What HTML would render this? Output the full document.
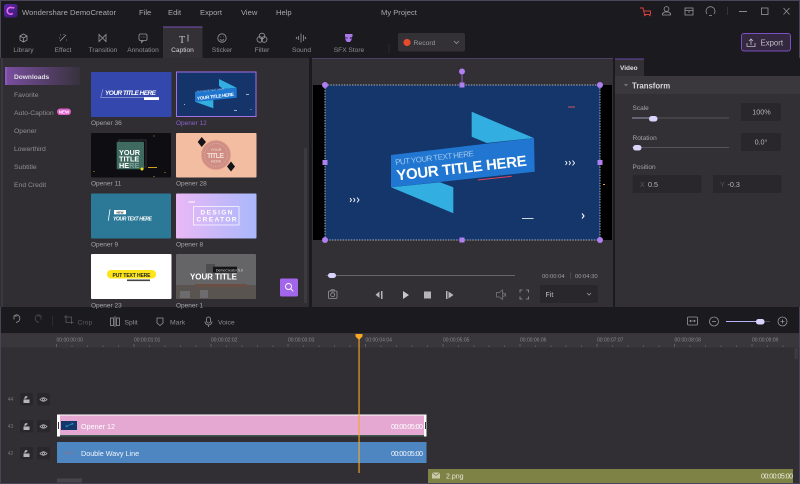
<!DOCTYPE html>
<html><head><meta charset="utf-8"><style>
html,body{margin:0;padding:0;background:#1b1a1e;width:800px;height:484px;overflow:hidden}
svg{display:block;filter:blur(.3px)}
text{font-family:"Liberation Sans",sans-serif}
.m{fill:#a9a8ab;font-size:7.6px}
.tab{fill:#8f8e92;font-size:6.6px;text-anchor:middle}
.side{fill:#8f8e92;font-size:6.8px}
.lbl{fill:#a5a4a8;font-size:6.5px}
.rul{fill:#8b8a8e;font-size:5px}
.ic{fill:none;stroke:#98979b;stroke-width:.8}
.tb{fill:#8f8e92;font-size:6.8px}
.num{fill:#77767a;font-size:5px;text-anchor:middle}
.val{fill:#b5b4b8;font-size:7.2px;text-anchor:middle}
.h{fill:#b07ff0}
.tk{stroke:#77767a;stroke-width:.6}
</style></head><body>
<svg width="800" height="484" viewBox="0 0 800 484" xmlns="http://www.w3.org/2000/svg">
<defs>
<linearGradient id="dl" x1="0" x2="1" y1="0" y2="0"><stop offset="0" stop-color="#7a4fa0"/><stop offset="1" stop-color="#38323e"/></linearGradient>
<linearGradient id="o8" x1="0" x2="1" y1="0" y2="0"><stop offset="0" stop-color="#eab8f6"/><stop offset="1" stop-color="#a9b8fb"/></linearGradient>
<linearGradient id="logo" x1="0" x2="1" y1="0" y2="1"><stop offset="0" stop-color="#5a28a8"/><stop offset="1" stop-color="#3d1a78"/></linearGradient>
</defs>
<rect width="800" height="484" fill="#1b1a1e"/>
<rect x="0" y="0" width="800" height="1" fill="#4a4458"/>
<rect x="0" y="0" width="1" height="484" fill="#4a4458"/>
<rect x="799" y="0" width="1" height="484" fill="#4a4458"/>
<rect x="0" y="483" width="800" height="1" fill="#4a4458"/>

<!-- title bar -->
<rect x="4" y="4" width="13.500" height="13.500" rx="2.500" fill="url(#logo)"/>
<path d="M12.800 8.200a3.400 3.400 0 1 0 0 5.200" fill="none" stroke="#ee6cea" stroke-width="1.600"/>
<circle cx="13.600" cy="7.800" r=".9" fill="#ee6cea"/>
<text class="m" x="22" y="15" textLength="94">Wondershare DemoCreator</text>
<text class="m" x="139" y="15">File</text>
<text class="m" x="168" y="15">Edit</text>
<text class="m" x="200" y="15">Export</text>
<text class="m" x="241" y="15">View</text>
<text class="m" x="276" y="15">Help</text>
<text class="m" x="381" y="15">My Project</text>
<path d="M640 8h3l1.500 6.500h6M644 11h6.500v3" fill="none" stroke="#d8413f" stroke-width="1"/><circle cx="645" cy="15.500" r=".8" fill="#d8413f"/><circle cx="650" cy="15.500" r=".8" fill="#d8413f"/>
<circle cx="666.500" cy="9" r="2.400" class="ic"/><path class="ic" d="M662.500 15v-1.500l2-1.500h4l2 1.500V15z"/>
<rect x="685" y="8" width="8" height="7" class="ic"/><path class="ic" d="M685 10.500h8M688 12h2"/>
<path class="ic" d="M707 14a4.500 4.500 0 1 1 7 0M709 15.500h3"/>
<path d="M727.500 7v8" stroke="#3d3b40" stroke-width=".8"/>
<path d="M739 11.500h8" stroke="#98979b" stroke-width=".9"/>
<rect x="761.500" y="8" width="6.500" height="6.500" class="ic"/>
<path class="ic" d="M783.500 8l6 6.500M789.500 8l-6 6.500"/>

<!-- tabs -->
<rect x="163" y="27" width="39.500" height="31" fill="#333135"/>
<rect x="163" y="26.500" width="39.500" height="1" fill="#7a50b8"/>
<path class="ic" d="M23.500 34l3.500 2v4l-3.500 2-3.500-2v-4zM20 36l3.500 2 3.500-2M23.500 38v4"/>
<path class="ic" d="M60 41l6-6M60 35h1M59 38h1M66 40h1M64 34v1"/>
<path class="ic" d="M99 34.500v7l3.500-3.500zM106 34.500v7l-3.500-3.500z"/>
<rect x="139" y="34" width="8" height="6.500" rx="1.500" class="ic"/><path class="ic" d="M141.500 40.500v2l2-2M141.500 37h.6M143 37h.6M144.500 37h.6"/>
<text x="182" y="43" fill="#c8c7cb" font-size="10" text-anchor="middle" style="font-family:'Liberation Serif',serif">T</text><path d="M188 34.500v7" stroke="#c8c7cb" stroke-width=".8"/>
<circle cx="222" cy="38" r="4.200" class="ic"/><path class="ic" d="M220 39.500q2 1.500 4 0M220.300 36.800h.5M223.300 36.800h.5"/>
<circle cx="262" cy="36" r="2.800" class="ic"/><circle cx="259.800" cy="39.500" r="2.800" class="ic"/><circle cx="264.200" cy="39.500" r="2.800" class="ic"/>
<path class="ic" d="M301 33.500v9M303.500 35v6M298.500 36v4M306 37l-1 1 1 1M296 37l1 1-1 1"/>
<path d="M345 34h7.500v2.500l-1 .7V40l-1.500 2h-3l-1.500-2v-3l-.5-.5z" fill="#a878e8"/><circle cx="347" cy="38" r=".7" fill="#2a2540"/><circle cx="350.500" cy="38" r=".7" fill="#2a2540"/>
<text class="tab" x="23.500" y="52">Library</text>
<text class="tab" x="63" y="52">Effect</text>
<text class="tab" x="103" y="52">Transition</text>
<text class="tab" x="143" y="52">Annotation</text>
<text class="tab" x="182.500" y="52" style="fill:#d5d4d8">Caption</text>
<text class="tab" x="222" y="52">Sticker</text>
<text class="tab" x="262" y="52">Filter</text>
<text class="tab" x="301.500" y="52">Sound</text>
<text class="tab" x="349" y="52">SFX Store</text>

<!-- record -->
<path d="M389 44v9" stroke="#333" stroke-width=".7"/>
<rect x="398" y="33" width="67" height="18.500" rx="2" fill="#333135"/>
<circle cx="407" cy="42.500" r="3.600" fill="#e84a2c"/>
<text x="413.500" y="45" fill="#99989c" font-size="6.800">Record</text>
<path class="ic" d="M454 41l2.500 2.500 2.500-2.500"/>

<!-- export -->
<rect x="741.500" y="33.500" width="49" height="17.500" rx="2.500" fill="#33283f" stroke="#7d4fc0" stroke-width="1"/>
<path class="ic" d="M747 43v3.500h8V43M751 45v-6M749 41l2-2 2 2" style="stroke:#c0bfc3"/>
<text x="760.500" y="45.500" fill="#c0bfc3" font-size="7.800">Export</text>

<!-- left panel -->
<rect x="0" y="58" width="309" height="249" fill="#302e32"/>
<rect x="1" y="58" width="2" height="249" fill="#3a3840"/>
<rect x="5" y="67" width="75" height="18" fill="url(#dl)"/>
<rect x="5" y="67" width="2" height="18" fill="#8a58c0"/>
<text x="14" y="79" fill="#e0dfe3" font-size="6.600" font-weight="bold">Downloads</text>
<text class="side" x="14" y="97">Favorite</text>
<text class="side" x="14" y="115">Auto-Caption</text>
<rect x="57" y="108.500" width="14" height="6.500" rx="3.200" fill="#df5fc8"/><text x="64" y="113.600" fill="#fff" font-size="4.500" text-anchor="middle" font-weight="bold">NEW</text>
<text class="side" x="14" y="133">Opener</text>
<text class="side" x="14" y="151">Lowerthird</text>
<text class="side" x="14" y="169">Subtitle</text>
<text class="side" x="14" y="187">End Credit</text>
<rect x="304" y="148" width="3" height="155" fill="#3c3a3e"/>

<!-- Opener 36 -->
<rect x="91" y="72" width="80.500" height="45" rx="1" fill="#3347ad"/>
<path d="M103 89.300l-2.300 8H159" fill="none" stroke="#aab3e0" stroke-width=".6"/>
<text x="105" y="95" fill="#fff" font-size="6.500" font-weight="bold" font-style="italic" textLength="51">YOUR TITLE HERE</text>
<rect x="144" y="97.300" width="15" height="2.700" fill="#fff"/>
<text class="lbl" x="91" y="125">Opener 36</text>
<!-- Opener 12 -->
<rect x="176.500" y="72" width="79.500" height="44.500" fill="#14346a" stroke="#a56de8" stroke-width="1"/>
<path d="M219 79L236.700 87.700L223 89L219 85.700z" fill="#32aee0"/>
<path d="M195 101.700L213.300 100L213.300 108.300z" fill="#32aee0"/>
<path d="M195 91.700L236.700 87.700V97.700L195 101.700z" fill="#2077d0"/>
<text x="197.300" y="92.500" fill="#9fc8ee" font-size="2.500" transform="rotate(-6 197.300 96)">PUT YOUR TEXT HERE</text>
<text x="197.300" y="100" fill="#fff" font-size="4.600" font-weight="bold" transform="rotate(-6.500 197.300 100)" textLength="37">YOUR TITLE HERE</text>
<path d="M246 94.500h3M184 104.500h1M234 110.500h3M251 109v1" stroke="#cfd8ef" stroke-width=".7"/>
<text x="176" y="125" fill="#8d62cf" font-size="6.500">Opener 12</text>
<!-- Opener 11 -->
<rect x="91" y="133" width="80" height="44.500" rx="1" fill="#0e0d12"/>
<rect x="119" y="140" width="27" height="27" fill="none" stroke="#444" stroke-width=".7"/>
<rect x="116.700" y="141.700" width="27.300" height="27.500" rx="1" fill="#3f6a60"/>
<text x="119" y="155" fill="#fff" font-size="7.300" font-weight="bold">YOUR</text>
<text x="119" y="161.500" fill="#fff" font-size="7.300" font-weight="bold">TITLE</text>
<text x="119" y="168" fill="#fff" font-size="7.300" font-weight="bold">HE<tspan fill="#7da298">RE</tspan></text>
<circle cx="142" cy="169" r="1.500" fill="#f4df10"/>
<path d="M148 167.500h9M154 135.500v1M154 177v-1M94 171v1M165 172v1" stroke="#d0a020" stroke-width=".9"/>
<text class="lbl" x="91" y="185.500">Opener 11</text>
<!-- Opener 28 -->
<rect x="176" y="133" width="80.500" height="44.500" rx="1" fill="#f3bda2"/>
<circle cx="216" cy="155" r="14.500" fill="#cf8e85" stroke="#e49b88" stroke-width=".8"/>
<circle cx="216" cy="155" r="11.500" fill="none" stroke="#f0cfc0" stroke-width=".4" stroke-dasharray="1 1"/>
<path d="M201.700 137l4.300 5-4.300 5-4-5zM231 161.500l4 5-4 5-4-5z" fill="#15141a"/>
<text x="216" y="151" fill="#f4dcd0" font-size="3.800" text-anchor="middle">YOUR</text>
<text x="215.500" y="158" fill="#f4dcd0" font-size="7" text-anchor="middle" font-weight="bold" textLength="17">TITLE</text>
<text x="216" y="162.500" fill="#f4dcd0" font-size="3.800" text-anchor="middle">HERE</text>
<text class="lbl" x="176" y="185.500">Opener 28</text>
<!-- Opener 9 -->
<rect x="91" y="193.500" width="80" height="45" rx="1" fill="#2b7897"/>
<path d="M110 209.300l-1.700 11.400" stroke="#fff" stroke-width=".8"/>
<rect x="114" y="210" width="12" height="4.300" fill="#fff"/>
<text x="120" y="213.300" fill="#333" font-size="3" text-anchor="middle" font-weight="bold">NEW</text>
<text x="113" y="220.700" fill="#fff" font-size="5" font-weight="bold" font-style="italic" textLength="39">YOUR TEXT HERE</text>
<text class="lbl" x="91" y="246.500">Opener 9</text>
<!-- Opener 8 -->
<rect x="176" y="193.500" width="80.500" height="45" rx="1" fill="url(#o8)"/>
<path d="M188.500 202h6.500" stroke="#fff" stroke-width="1"/>
<rect x="193.500" y="206.500" width="45.500" height="18.500" fill="none" stroke="#fff" stroke-width=".7"/>
<text x="216.500" y="214.500" fill="#fff" font-size="6.500" font-weight="bold" text-anchor="middle" textLength="32">DESIGN</text>
<text x="216.500" y="221.500" fill="#fff" font-size="6.500" font-weight="bold" text-anchor="middle" textLength="40">CREATOR</text>
<text class="lbl" x="176" y="246.500">Opener 8</text>
<!-- Opener 23 -->
<rect x="91" y="254" width="80.500" height="45" rx="1" fill="#fff"/>
<rect x="107" y="270" width="49" height="8.500" rx="4" fill="#fde51a"/>
<text x="131.500" y="276.800" fill="#222" font-size="5" font-weight="bold" text-anchor="middle" textLength="38">PUT TEXT HERE</text>
<rect x="127" y="279.500" width="23" height="1.600" fill="#444"/>
<text class="lbl" x="91" y="307.500">Opener 23</text>
<!-- Opener 1 -->
<rect x="176" y="254" width="80" height="45" rx="1" fill="#656466"/>
<rect x="176" y="285" width="80" height="14" fill="#5a5451"/>
<path d="M195 284h52v3h-52z" fill="#6a5044"/>
<path d="M180 291h10v7h-10zM200 290h8v8h-8z" fill="#6c6b6e"/>
<rect x="206" y="264" width="9" height="9" fill="#4f4c4d"/>
<rect x="213" y="266.700" width="24" height="6" fill="#151416"/>
<text x="216" y="271.500" fill="#ddd" font-size="3.500">DemoCreator 5.0</text>
<text x="213.500" y="279.500" fill="#fff" font-size="8" font-weight="bold" text-anchor="middle" textLength="47">YOUR TITLE</text>
<text class="lbl" x="176" y="307.500">Opener 1</text>
<!-- search -->
<rect x="280" y="278.500" width="18" height="18" rx="1.500" fill="#a266ea"/>
<circle cx="288.500" cy="286.500" r="3" fill="none" stroke="#fff" stroke-width=".9"/><path d="M290.800 288.800l2.500 2.500" stroke="#fff" stroke-width=".9"/>

<!-- preview panel -->
<rect x="309" y="58" width="3" height="249" fill="#1b1a1e"/>
<rect x="312" y="58" width="301" height="249" fill="#323034"/>
<rect x="312" y="58" width="301" height="1" fill="#4b3f62"/>
<rect x="313" y="85" width="299" height="155" fill="#000"/>
<rect x="325" y="85" width="275" height="155" fill="#14366a"/>
<path d="M471.700 111.700L533.700 138L486.700 143L471.700 136.700z" fill="#33aee0"/>
<path d="M440 182.300L453.300 187.300L453.300 213.300L391 187.300z" fill="#33aee0"/>
<path d="M391 155L534 138L534.700 171.700L391 187.300z" fill="#2076d0"/>
<text x="395.500" y="165" fill="#9fc8ee" font-size="8" transform="rotate(-6.500 395.500 165)" textLength="79">PUT YOUR TEXT HERE</text>
<text x="397" y="180.500" fill="#fff" font-size="15" font-weight="bold" transform="rotate(-6.500 397 180.500)" textLength="131">YOUR TITLE HERE</text>
<path d="M478 180L511.700 176.300" stroke="#e0455f" stroke-width="1"/>
<path d="M568 107h7" stroke="#d8525a" stroke-width="1"/>
<path d="M350 198l1.500 2-1.500 2M353.500 198l1.500 2-1.500 2M357 197.500l2 2.500-2 2.500" fill="none" stroke="#fff" stroke-width=".9"/>
<path d="M565.500 161l1.500 2-1.500 2M569 161l1.500 2-1.500 2M572.500 160.500l2 2.500-2 2.500" fill="none" stroke="#fff" stroke-width=".9"/>
<path d="M582 213.500l2 2.500-2 2.500" fill="none" stroke="#fff" stroke-width="1.100"/>
<path d="M522 218.500h11.500" stroke="#e4e8ee" stroke-width=".9"/>
<rect x="603" y="184" width="2" height="1" fill="#e8a020"/>
<rect x="325" y="85" width="275" height="155" fill="none" stroke="#d5d5d8" stroke-width=".8" stroke-dasharray="1.500 1.200"/>
<path d="M462 71v14" stroke="#a070e0" stroke-width=".8"/>
<circle class="h" cx="462" cy="71.500" r="3"/>
<circle class="h" cx="325" cy="85" r="3"/><circle class="h" cx="600" cy="85" r="3"/>
<circle class="h" cx="325" cy="240" r="3"/><circle class="h" cx="600" cy="240" r="3"/>
<rect class="h" x="459.500" y="82.500" width="5" height="5"/><rect class="h" x="322.500" y="160" width="5" height="5"/>
<rect class="h" x="597.500" y="160" width="5" height="5"/><rect class="h" x="459.500" y="237.500" width="5" height="5"/>

<!-- player controls -->
<path d="M326 275.500H515" stroke="#77767a" stroke-width=".8"/>
<rect x="328" y="273" width="8" height="5" rx="2.500" fill="#d8d4fb"/>
<text x="542" y="278" fill="#a09fa3" font-size="5.800">00:00:04</text>
<path d="M570.500 272.500v6" stroke="#5a595d" stroke-width=".6"/>
<text x="575" y="278" fill="#a09fa3" font-size="5.800">00:04:30</text>
<rect x="328.500" y="291" width="8.500" height="7.500" rx="1" class="ic"/><circle cx="332.700" cy="294.700" r="2" class="ic"/><path class="ic" d="M330.500 291l.8-1.200h2.800l.8 1.200"/>
<path d="M379.500 291.500v6.500l-4-3.200zM381 291h1.500v8H381z" fill="#b5b4b8"/>
<path d="M403 291v8l6-4z" fill="#c8c7cb"/>
<rect x="424" y="291.500" width="7" height="7" fill="#b5b4b8"/>
<path d="M446 291h1.500v8H446zM448.500 291.500v7l5-3.500z" fill="#b5b4b8"/>
<path class="ic" d="M496.500 292.500v4.500h3l3 2.500v-9.500l-3 2.500zM505 293q1.500 2 0 3.500M503.500 292.500q1.500 2.500 0 4.500" style="stroke:#77767a"/>
<path class="ic" d="M520 292.500v-2.500h2.500M526 290h2.500v2.500M528.500 296.500v2.500H526M522.500 299H520v-2.500"/>
<rect x="540" y="285" width="58" height="18" rx="2" fill="#29272b"/>
<text x="545.500" y="297" fill="#c0bfc3" font-size="7">Fit</text>
<path class="ic" d="M587 293l2 2 2-2"/>

<!-- right panel -->
<rect x="615" y="58" width="185" height="249" fill="#323034"/>
<rect x="615" y="58" width="185" height="18" fill="#1b1a1e"/>
<rect x="615" y="59" width="29" height="17.500" fill="#323034"/>
<rect x="615" y="58.500" width="29" height="1" fill="#6a48a8"/>
<text x="620" y="70" fill="#dedde1" font-size="6.500" font-weight="bold">Video</text>
<rect x="615" y="76" width="185" height="18" fill="#3a383c"/>
<path class="ic" d="M624.500 84l1.500 1.500 1.500-1.500"/>
<text x="632" y="88.500" fill="#d8d7db" font-size="7.800" font-weight="bold">Transform</text>
<text x="632.500" y="110" fill="#a5a4a8" font-size="6.500">Scale</text>
<path d="M632 118H729" stroke="#555458" stroke-width=".9"/>
<path d="M632 118H652" stroke="#9a96b0" stroke-width=".9"/>
<rect x="649" y="116" width="8.500" height="5.500" rx="2.700" fill="#d8d4fb"/>
<rect x="741" y="103" width="40" height="18" rx="1.500" fill="#29272b"/>
<text class="val" x="761.500" y="114.500">100%</text>
<text x="632.500" y="140" fill="#a5a4a8" font-size="6.500">Rotation</text>
<path d="M632 147.500H729" stroke="#555458" stroke-width=".9"/>
<rect x="633" y="145" width="8.500" height="5.500" rx="2.700" fill="#d8d4fb"/>
<rect x="741" y="133" width="40" height="18" rx="1.500" fill="#29272b"/>
<text class="val" x="761" y="144.500">0.0°</text>
<text x="632.500" y="169" fill="#a5a4a8" font-size="6.500">Position</text>
<rect x="632.500" y="175" width="69" height="18" rx="1" fill="#29272b"/>
<text x="640" y="187" fill="#58575b" font-size="7">X</text>
<text x="648" y="187" fill="#b5b4b8" font-size="7.200">0.5</text>
<rect x="713" y="175" width="68.500" height="18" rx="1" fill="#29272b"/>
<text x="720" y="187" fill="#58575b" font-size="7">Y</text>
<text x="727.500" y="187" fill="#b5b4b8" font-size="7.200">-0.3</text>

<!-- timeline toolbar -->
<path class="ic" d="M14 319.500v-3.500h3.500M14 316q3-2.500 5 0t-.5 5.500l-2.500 1"/>
<path d="M41 319.500v-3.500h-3.500M41 316q-3-2.500-5 0t.5 5.500l2.500 1" fill="none" stroke="#4d4c50" stroke-width=".8"/>
<path d="M52.500 316v10" stroke="#333236" stroke-width=".7"/>
<path d="M64 317h7.500v7M66 315v7.500h7.500" fill="none" stroke="#5c5b5f" stroke-width=".8"/>
<text x="77.500" y="324.500" fill="#5c5b5f" font-size="6.800">Crop</text>
<rect x="110.500" y="318" width="3" height="7.500" class="ic"/><rect x="116.500" y="318" width="3" height="7.500" class="ic"/><path class="ic" d="M115 316v11"/>
<text class="tb" x="124.500" y="324.500">Split</text>
<path class="ic" d="M157 318h6v5l-3 2.500-3-2.500z"/>
<text class="tb" x="170" y="324.500">Mark</text>
<rect x="206.500" y="317" width="4" height="6" rx="2" class="ic"/><path class="ic" d="M205 321.500a3.500 3.500 0 0 0 7 0M208.500 325v2"/>
<text class="tb" x="218" y="324.500">Voice</text>
<rect x="687.500" y="317" width="10" height="8" rx="1" class="ic"/><path class="ic" d="M690 321h5M690.800 320l-1 1 1 1M694.200 320l1 1-1 1"/>
<circle cx="714" cy="321.500" r="4.500" class="ic"/><path class="ic" d="M712 321.500h4"/>
<path d="M726 321.500h34" stroke="#b8b2f8" stroke-width="1"/>
<path d="M760 321.500h10" stroke="#555458" stroke-width=".8"/>
<rect x="756" y="319" width="8.500" height="5.500" rx="2.500" fill="#d8d4fb"/>
<circle cx="782.500" cy="321.500" r="4.500" class="ic"/><path class="ic" d="M780.500 321.500h4M782.500 319.500v4"/>

<!-- timeline -->
<rect x="1" y="333" width="798" height="150" fill="#312f33"/>
<rect x="1" y="333.500" width="798" height="14" fill="#39373b"/>
<text class="rul" x="56.500" y="341.500">00:00:00:00</text>
<text class="rul" x="134" y="341.500">00:00:01:01</text>
<text class="rul" x="211" y="341.500">00:00:02:02</text>
<text class="rul" x="288" y="341.500">00:00:03:03</text>
<text class="rul" x="365.500" y="341.500">00:00:04:04</text>
<text class="rul" x="443" y="341.500">00:00:05:05</text>
<text class="rul" x="520" y="341.500">00:00:06:06</text>
<text class="rul" x="597" y="341.500">00:00:07:07</text>
<text class="rul" x="674.500" y="341.500">00:00:08:08</text>
<text class="rul" x="752" y="341.500">00:00:09:09</text>
<path class="tk" d="M56.500 344v3M134 344v3M211 344v3M288 344v3M365.500 344v3M443 344v3M520 344v3M597 344v3M674.500 344v3M752 344v3"/>
<path class="tk" d="M72 345.500v1.500M87.500 345.500v1.500M103 345.500v1.500M118.500 345.500v1.500M149.500 345.500v1.500M165 345.500v1.500M180.500 345.500v1.500M196 345.500v1.500M226.500 345.500v1.500M242 345.500v1.500M257.500 345.500v1.500M273 345.500v1.500M303.500 345.500v1.500M319 345.500v1.500M334.500 345.500v1.500M350 345.500v1.500M381 345.500v1.500M396.500 345.500v1.500M412 345.500v1.500M427.500 345.500v1.500M458.500 345.500v1.500M474 345.500v1.500M489 345.500v1.500M504.500 345.500v1.500M535.500 345.500v1.500M551 345.500v1.500M566 345.500v1.500M581.500 345.500v1.500M612.500 345.500v1.500M628 345.500v1.500M643.500 345.500v1.500M659 345.500v1.500M690 345.500v1.500M705.500 345.500v1.500M721 345.500v1.500M736.500 345.500v1.500M767.500 345.500v1.500M783 345.500v1.500"/>
<rect x="794.500" y="348" width="3.500" height="11" fill="#3d3b40"/>

<!-- track heads -->
<text class="num" x="10.500" y="401">44</text>
<rect x="20" y="393" width="13" height="12.500" rx="1" fill="#29272b"/>
<rect x="37" y="393" width="13" height="12.500" rx="1" fill="#29272b"/>
<text class="num" x="10.500" y="428">43</text>
<rect x="20" y="420" width="13" height="12.500" rx="1" fill="#29272b"/>
<rect x="37" y="420" width="13" height="12.500" rx="1" fill="#29272b"/>
<text class="num" x="10.500" y="455">42</text>
<rect x="20" y="447" width="13" height="12.500" rx="1" fill="#29272b"/>
<rect x="37" y="447" width="13" height="12.500" rx="1" fill="#29272b"/>
<g fill="#b5b4b8">
<path d="M23.500 399.500h6v3.500h-6zM24.500 399.500v-2a1.700 1.700 0 0 1 3.200-.5" />
<path d="M23.500 426.500h6v3.500h-6zM24.500 426.500v-2a1.700 1.700 0 0 1 3.200-.5" />
<path d="M23.500 453.500h6v3.500h-6zM24.500 453.500v-2a1.700 1.700 0 0 1 3.200-.5" />
</g>
<g fill="none" stroke="#b5b4b8" stroke-width=".8">
<path d="M40 399.500q3.500-3.500 7 0q-3.500 3.500-7 0z"/><circle cx="43.500" cy="399.500" r="1"/>
<path d="M40 426.500q3.500-3.500 7 0q-3.500 3.500-7 0z"/><circle cx="43.500" cy="426.500" r="1"/>
<path d="M40 453.500q3.500-3.500 7 0q-3.500 3.500-7 0z"/><circle cx="43.500" cy="453.500" r="1"/>
</g>

<!-- clips -->
<rect x="57" y="414.500" width="369.500" height="22" fill="#fff"/>
<rect x="60" y="415.500" width="364" height="20" fill="#e4a8d2"/>
<rect x="60" y="435" width="364" height="1.500" fill="#3f5a50"/>
<rect x="58" y="422" width="1" height="7" fill="#333"/>
<rect x="425" y="422" width="1" height="7" fill="#333"/>
<rect x="61" y="421" width="16" height="9" fill="#14366a"/>
<path d="M65 426l7-2-1-1.500 3 1.500-7 2 1 1.500z" fill="#33aee0"/>
<text x="81" y="429" fill="#fff" font-size="7.200">Opener 12</text>
<text x="391" y="429" fill="#fff" font-size="7.200" textLength="32">00:00:05:00</text>
<rect x="57" y="442" width="369.500" height="21" fill="#4e86c2"/>
<path d="M64 453h10" stroke="#b06a70" stroke-width=".8" stroke-dasharray="1.500 .7"/>
<text x="81" y="456" fill="#f0f5fb" font-size="7.200">Double Wavy Line</text>
<text x="391" y="456" fill="#f0f5fb" font-size="7.200" textLength="32">00:00:05:00</text>
<rect x="428" y="469" width="365" height="14" fill="#7e8244"/>
<rect x="432" y="472.500" width="8" height="6" fill="#c9caa8"/><path d="M432 472.500l4 3 4-3" stroke="#6e7240" stroke-width=".6" fill="none"/>
<text x="446" y="478.500" fill="#e8e8d8" font-size="7">2.png</text>
<text x="761" y="478.500" fill="#f0f0e4" font-size="7" textLength="32">00:00:05:00</text>
<rect x="57" y="478.500" width="25" height="4" fill="#47454a"/>

<!-- playhead -->
<rect x="358.500" y="334" width="1.100" height="139" fill="#f6a823"/>
<path d="M355.500 334h7v2.500l-3.500 3.500-3.500-3.500z" fill="#f6a823"/>
</svg>
</body></html>
